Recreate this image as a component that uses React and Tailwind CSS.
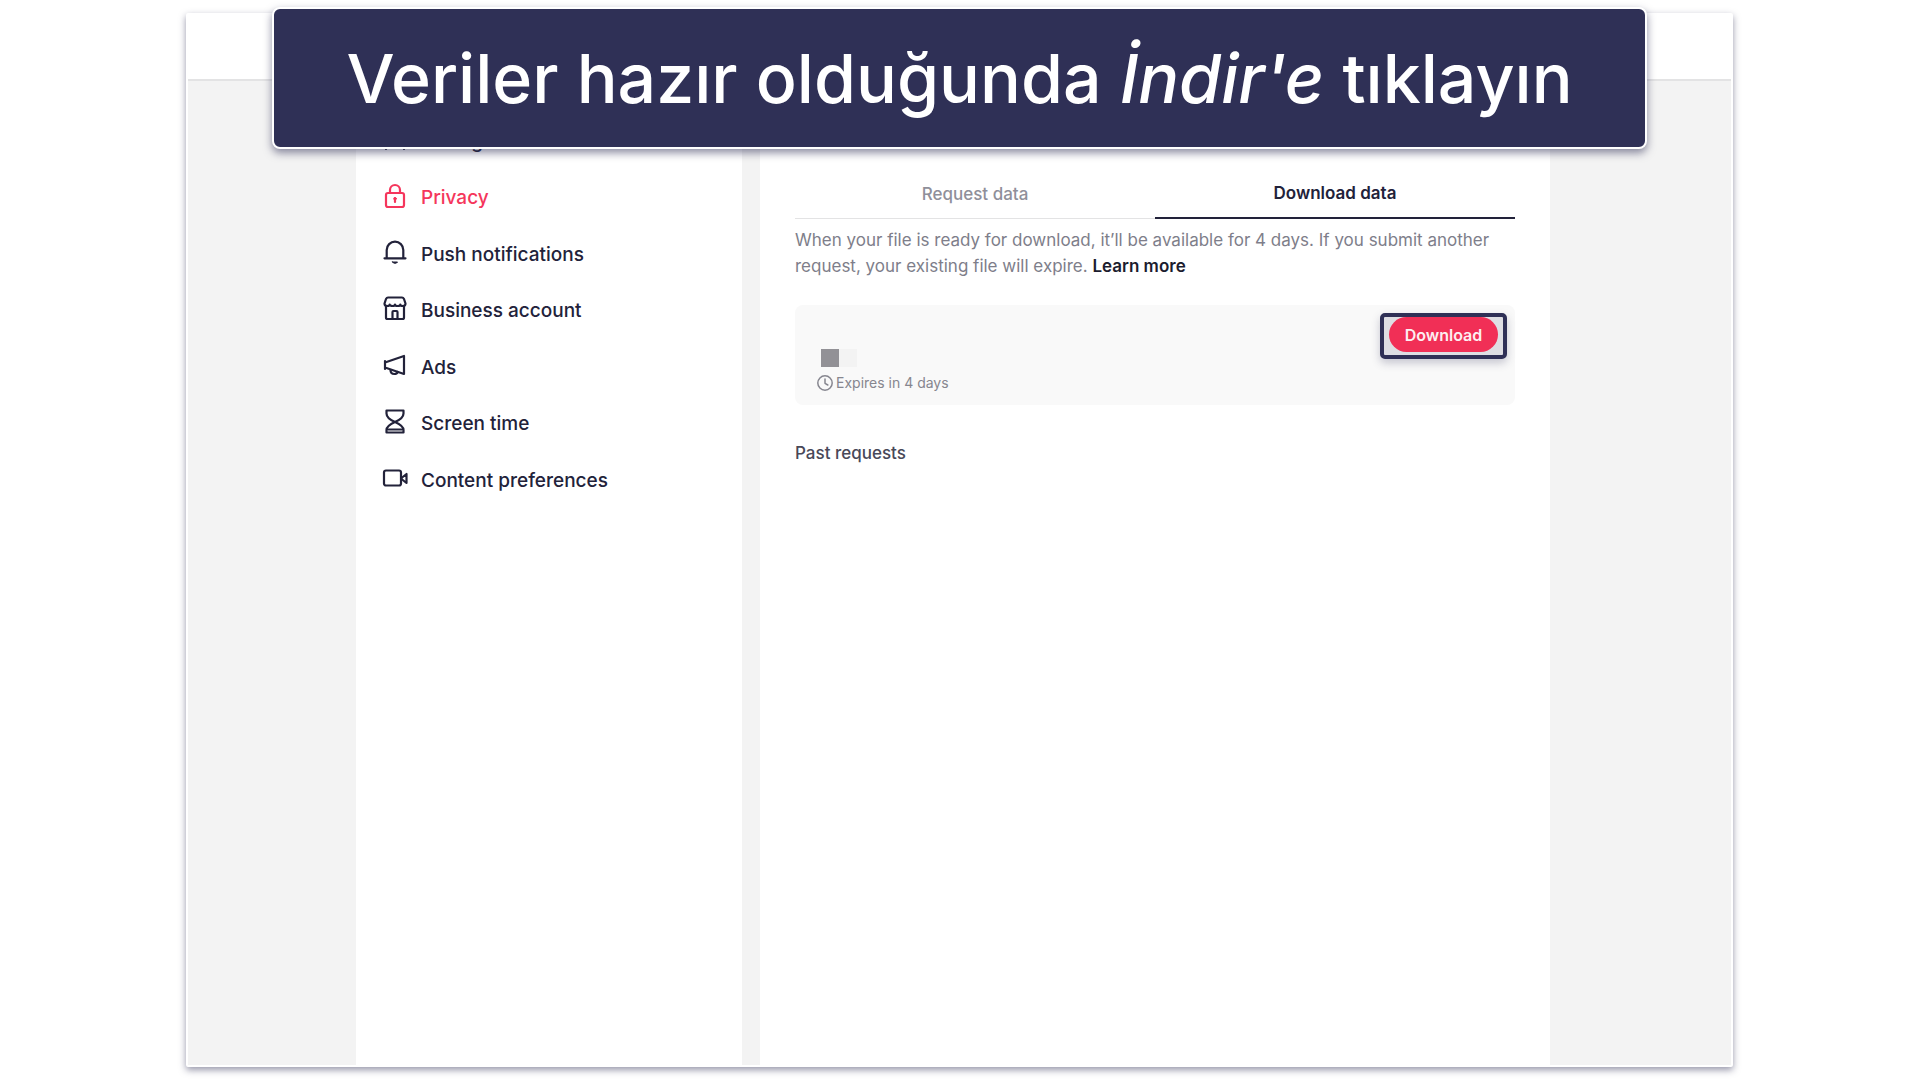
import React, { useState } from 'react';

const stroke = {
    fill: 'none',
    stroke: 'currentColor',
    strokeWidth: 2.2,
    strokeLinecap: 'round',
    strokeLinejoin: 'round',
};

function Icon({ children }) {
    return (
        <svg width="26" height="26" viewBox="0 0 26 26" className="mb-1.5 shrink-0" aria-hidden="true" {...stroke}>
            {children}
        </svg>
    );
}

const menu = [
    {
        label: 'Manage account',
        icon: (
            <>
                <circle cx="13" cy="7" r="5" />
                <path d="M4 23c0-6 4-9 9-9s9 3 9 9" />
            </>
        ),
    },
    {
        label: 'Privacy',
        icon: (
            <>
                <rect x="4" y="10" width="18" height="14" rx="2" />
                <path d="M8 10V7a5 5 0 0 1 10 0v3M13 16.5V19" />
                <circle cx="13" cy="15.7" r="1.3" fill="currentColor" strokeWidth="1" />
            </>
        ),
    },
    {
        label: 'Push notifications',
        icon: (
            <>
                <path d="M2.5 19.3h21M4.7 19.3V11a8.3 8.3 0 0 1 16.6 0v8.3" />
                <path d="M10.5 23h5a2.6 1.8 0 0 1-5 0z" fill="currentColor" strokeWidth="1" />
            </>
        ),
    },
    {
        label: 'Business account',
        icon: (
            <>
                <path d="M4 11v11.5c0 1 .5 1.5 1.5 1.5h15c1 0 1.5-.5 1.5-1.5V11" />
                <path d="M6 2.5h14c1 0 1.5.5 2 1.5l1.5 4.5c0 1.8-1.3 2.5-2.6 2.5s-2.6-.7-2.6-1.5c0 .8-1.2 1.5-2.6 1.5S13 10.3 13 9.5c0 .8-1.3 1.5-2.7 1.5s-2.6-.7-2.6-1.5c0 .8-1.3 1.5-2.6 1.5S2.5 10.3 2.5 8.5L4 4c.5-1 1-1.5 2-1.5z" />
                <path d="M10.5 24v-7c0-.7.3-1 1-1h3c.7 0 1 .3 1 1v7" />
            </>
        ),
    },
    {
        label: 'Ads',
        icon: (
            <>
                <path d="M3 9v8M3 10.5L22 4v18L3 15.5z" />
                <path d="M8.5 18c0 2.5 1.5 4 3.8 4 1.7 0 2.9-.8 3.4-2" />
            </>
        ),
    },
    {
        label: 'Screen time',
        icon: (
            <>
                <path d="M4.5 2.5h17v3c0 4-4 6.5-8.5 8.5-4.5-2-8.5-4.5-8.5-8.5zM4.5 24.5h17V22c0-4-4-6-8.5-8-4.5 2-8.5 4-8.5 8z" />
                <path d="M6 21.5h14" />
            </>
        ),
    },
    {
        label: 'Content preferences',
        icon: (
            <>
                <rect x="2" y="5.5" width="17" height="15" rx="2" />
                <path d="M19.5 13l5-4v9l-5-4z" />
            </>
        ),
    },
];

function Sidebar() {
    return (
        <nav className="w-[386px] shrink-0 bg-white pt-[33px]">
            <ul className="grid h-[395px] grid-rows-7">
                {menu.map((item) => (
                    <li key={item.label} className="flex items-center">
                        <a
                            href="#"
                            className={
                                item.label === 'Privacy'
                                    ? 'flex items-center gap-[13px] pl-[26px] text-[19px] font-medium text-[#f5365c]'
                                    : 'flex items-center gap-[13px] pl-[26px] text-[19px] font-medium text-[#22223a]'
                            }
                        >
                            <Icon>{item.icon}</Icon>
                            {item.label}
                        </a>
                    </li>
                ))}
            </ul>
        </nav>
    );
}

function RequestCard() {
    return (
        <div className="mt-[26px] flex h-[100px] justify-between rounded-lg bg-[#f9f9f9]">
            <div className="flex flex-col justify-end gap-1 pb-[10px] pl-[22px]">
                <div className="flex pl-1">
                    <span className="h-[18px] w-[18px] bg-[#929196]" />
                    <span className="h-[18px] w-[18px] bg-[#f3f3f3]" />
                </div>
                <p className="flex items-center gap-[3px] text-sm leading-6 text-[#86868f]">
                    <svg width="16" height="16" viewBox="0 0 16 16" aria-hidden="true" {...stroke} strokeWidth="1.5">
                        <circle cx="8" cy="8" r="7.2" />
                        <path d="M8 4v4.3l2.8 1.7" />
                    </svg>
                    Expires in 4 days
                </p>
            </div>
            <div className="mt-2 mr-2 flex h-[46px] w-[127px] items-start justify-center rounded-[5px] border-4 border-[#2f3056] bg-[#dedee3] shadow-[0_4px_8px_rgba(47,48,86,0.25)]">
                <button type="button" className="h-[35px] w-[109px] rounded-full bg-[#f12f56] text-base font-semibold text-[#fdeef1]">
                    Download
                </button>
            </div>
        </div>
    );
}

function DataPanel() {
    const [tab, setTab] = useState('Download data');

    return (
        <main className="flex-1 bg-white pt-[90px] pr-[35px] pl-[35px]">
            <div role="tablist" className="flex">
                {['Request data', 'Download data'].map((name) => (
                    <button
                        key={name}
                        type="button"
                        role="tab"
                        aria-selected={tab === name}
                        onClick={() => setTab(name)}
                        className={
                            tab === name
                                ? 'h-12 flex-1 border-b-2 border-[#22223a] text-[17px] font-semibold text-[#22223a]'
                                : 'h-12 flex-1 border-b border-[#e3e3e4] text-[17px] font-medium text-[#8f8f9a]'
                        }
                    >
                        {name}
                    </button>
                ))}
            </div>
            <p className="mt-2 text-[17px] leading-[26px] text-[#7e7e8a]">
                When your file is ready for download, it’ll be available for 4 days. If you submit another
                request, your existing file will expire.{' '}
                <a href="#" className="font-semibold text-[#1c1c2e]">Learn more</a>
            </p>
            <RequestCard />
            <h2 className="mt-9 text-[17px] leading-6 font-medium text-[#484858]">Past requests</h2>
        </main>
    );
}

export default function App() {
    return (
        <div className="relative flex min-h-screen flex-col bg-white px-[186px] pt-[13px] pb-3 font-['Inter',sans-serif]">
            <div className="flex flex-1 flex-col rounded-xs border-2 border-white bg-[#f3f3f3] shadow-[0_3px_7px_rgba(47,48,86,0.5)]">
                <header className="h-[66px] border-b-2 border-[#e3e3e4] bg-white" />
                <div className="flex flex-1 gap-[18px] pr-[181px] pl-[168px]">
                    <Sidebar />
                    <DataPanel />
                </div>
            </div>
            <div
                lang="tr"
                className="absolute inset-x-[272px] top-[7px] flex h-[142px] items-center justify-center rounded-lg border-2 border-white bg-[#2f3056] shadow-[0_4px_8px_rgba(47,48,86,0.55)]"
            >
                <h1 className="text-[68px] leading-none font-medium whitespace-nowrap text-white">
                    Veriler hazır olduğunda <em>İndir'e</em> tıklayın
                </h1>
            </div>
        </div>
    );
}
